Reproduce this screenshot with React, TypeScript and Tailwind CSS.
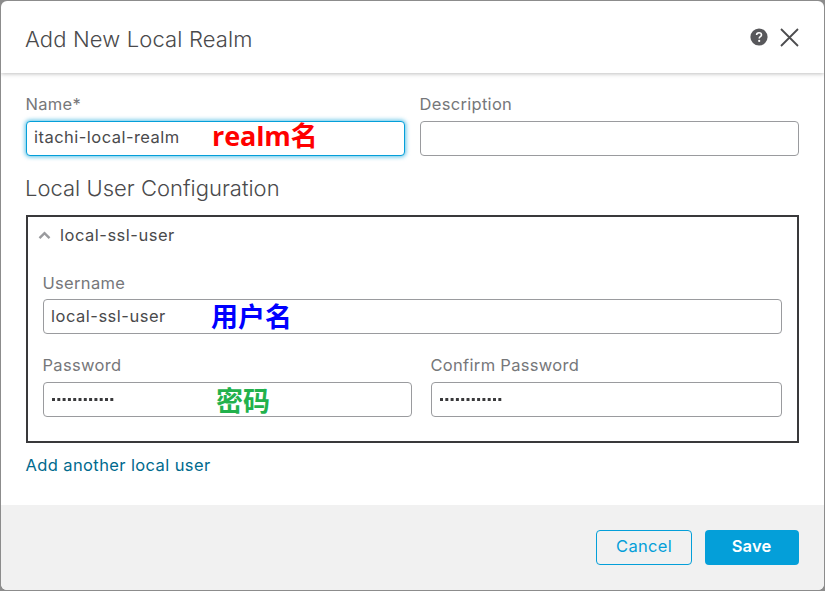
import type { ReactNode } from "react";

const cjk = "font-['Noto_Sans_CJK_SC',sans-serif]";

function Label({ children, className = "" }: { children: ReactNode; className?: string }) {
  return (
    <div className={`-ml-[0.5px] h-6 text-[16.5px] leading-6 tracking-[0.31px] whitespace-nowrap text-[#76777a] ${className}`}>
      {children}
    </div>
  );
}

function Field({ children, focused = false }: { children?: ReactNode; focused?: boolean }) {
  return (
    <div
      className={`relative flex h-[35px] items-center rounded-[4px] border bg-white px-[7px] ${
        focused ? "border-[#049fd9] shadow-[0_0_4px_1px_rgba(4,159,217,0.65)]" : "border-[#9a9b9e]"
      }`}
    >
      {children}
    </div>
  );
}

function Dots() {
  return (
    <svg width="64" height="3" viewBox="0 0 64 3" className="-mt-px ml-px" fill="#39393b">
      {Array.from({ length: 12 }, (_, i) => (
        <rect key={i} x={i * 5.3} y="0" width="3" height="3" rx="0.3" />
      ))}
    </svg>
  );
}

export default function App() {
  return (
    <div className="h-[591px] w-[825px] bg-[#8c8c8c] p-px font-['Inter',sans-serif] text-[16.5px] text-[#4a4a4c]">
      <div className="flex h-[589px] flex-col overflow-hidden rounded-[6px] bg-white">
        <header className="z-10 flex h-[72px] shrink-0 items-center justify-between pr-[25px] pl-6 shadow-[0_1px_4px_rgba(0,0,0,0.25)]">
          <h1 className="mt-1 text-[22px] leading-8 font-light tracking-[0.14px] whitespace-nowrap">Add New Local Realm</h1>
          <div className="-mt-px flex items-center gap-3">
            <svg width="18" height="18" viewBox="0 0 18 18">
              <circle cx="9" cy="9" r="8.6" fill="#58585b" />
              <path d="M6.6 7.1C6.6 5.6 7.6 4.7 9 4.7s2.5.9 2.5 2.2c0 1.8-2.3 1.8-2.3 3.5" fill="none" stroke="#fff" strokeWidth="1.6" />
              <circle cx="9.2" cy="12.9" r="1.1" fill="#fff" />
            </svg>
            <svg width="19" height="19" viewBox="0 0 19 19" className="mt-[2px]">
              <path d="M1 1 18 18M18 1 1 18" stroke="#4c4c4e" strokeWidth="1.8" />
            </svg>
          </div>
        </header>

        <main className="h-[432px] shrink-0 px-[25px] pt-[19px]">
          <div className="grid grid-cols-[379px_379px] gap-[15px]">
            <div>
              <Label className="mb-[5px]">Name*</Label>
              <Field focused>
                <span className="-mt-[3px] tracking-[0.47px]">itachi-local-realm</span>
                <span className="absolute top-[-6px] left-[185px] font-['Open_Sans','Noto_Sans_CJK_SC',sans-serif] text-[27px] leading-10 font-bold tracking-[-0.1px] whitespace-nowrap text-[#ff0000]">realm名</span>
              </Field>
            </div>
            <div>
              <Label className="mb-[5px]">Description</Label>
              <Field />
            </div>
          </div>

          <h2 className="mt-4 -ml-px h-8 text-[22px] leading-8 font-light tracking-[0.01px] whitespace-nowrap">Local User Configuration</h2>

          <section className="mt-[11px] h-[228px] border-2 border-[#39393b] px-[15px] pt-[6px]">
            <div className="-ml-[5px] flex h-6 items-center">
              <svg width="13" height="9" viewBox="0 0 13 9">
                <path d="M1.5 7.2 6.5 2.2 11.5 7.2" fill="none" stroke="#9a9b9e" strokeWidth="2.4" />
              </svg>
              <span className="ml-[9px] leading-6 tracking-[0.51px]">local-ssl-user</span>
            </div>
            <Label className="mt-6 mb-1">Username</Label>
            <Field>
              <span className="-mt-px tracking-[0.51px]">local-ssl-user</span>
              <span className={`absolute top-[-4px] left-[167px] text-[27px] leading-10 font-bold whitespace-nowrap text-[#0000ff] ${cjk}`}>用户名</span>
            </Field>
            <div className="mt-[19px] grid grid-cols-[369px_351px] gap-[19px]">
              <div>
                <Label className="mb-[5px]">Password</Label>
                <Field>
                  <Dots />
                  <span className={`absolute top-[-3px] left-[172px] text-[27px] leading-10 font-bold whitespace-nowrap text-[#22b14c] ${cjk}`}>密码</span>
                </Field>
              </div>
              <div>
                <Label className="mb-[5px]">Confirm Password</Label>
                <Field>
                  <Dots />
                </Field>
              </div>
            </div>
          </section>

          <a className="mt-[10px] -ml-[0.5px] block leading-6 tracking-[0.39px] whitespace-nowrap text-[#006a8e]">Add another local user</a>
        </main>

        <footer className="flex grow items-start justify-end gap-[13px] bg-[#f1f1f1] pt-[25px] pr-[25px]">
          <button className="h-[35px] w-24 rounded-[4px] border border-[#049fd9] pb-[3px] tracking-[0.3px] text-[#049fd9]">Cancel</button>
          <button className="h-[35px] w-[94px] rounded-[4px] bg-[#049fd9] pr-px pb-[3px] font-semibold tracking-[0.1px] text-white">Save</button>
        </footer>
      </div>
    </div>
  );
}
